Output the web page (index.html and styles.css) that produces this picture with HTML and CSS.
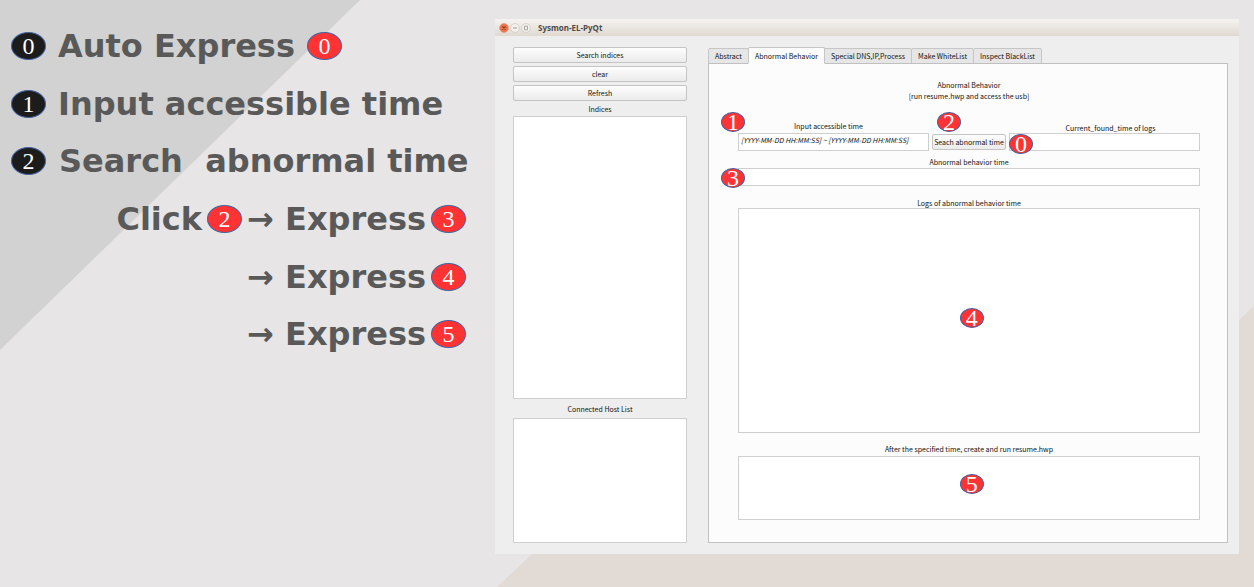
FILE: index.html
```html
<!DOCTYPE html>
<html lang="en">
<head>
<meta charset="utf-8">
<title>Sysmon-EL-PyQt</title>
<link rel="stylesheet" href="styles.css">
</head>
<body>
<svg class="backdrop" viewBox="0 0 1254 587" preserveAspectRatio="none" aria-hidden="true">
  <path fill="#d2d2d2" d="M0 0H360L0 350Z"/>
  <path fill="#e1dad5" d="M497 587L532 554L1225 333L1254 306V587Z"/>
</svg>
<main class="slide">
  <section class="steps">
    <div class="step"><span class="badge dark">0</span><span>Auto Express</span><span class="badge">0</span></div>
    <div class="step"><span class="badge dark">1</span><span>Input accessible time</span></div>
    <div class="step search"><span class="badge dark">2</span><span>Search  abnormal time</span></div>
    <div class="step result"><span>Click</span><span class="badge">2</span><span>→ Express</span><span class="badge">3</span></div>
    <div class="step result"><span>→ Express</span><span class="badge">4</span></div>
    <div class="step result"><span>→ Express</span><span class="badge">5</span></div>
  </section>

  <section class="window">
    <header class="titlebar">
      <button class="control" type="button" aria-label="Close"><svg viewBox="0 0 10 10"><circle cx="5" cy="5" r="4.4" fill="#ef7245" stroke="#d99a80" stroke-width=".8"/><path d="M3.4 3.4L6.6 6.6M6.6 3.4L3.4 6.6" stroke="#7c4130" stroke-width="1.1"/></svg></button>
      <button class="control" type="button" aria-label="Minimize"><svg viewBox="0 0 10 10"><circle cx="5" cy="5" r="4.4" fill="#f3f1ed" stroke="#d0ccc5" stroke-width=".8"/><path d="M3 5H7" stroke="#8b8882" stroke-width=".8"/></svg></button>
      <button class="control" type="button" aria-label="Maximize"><svg viewBox="0 0 10 10"><circle cx="5" cy="5" r="4.4" fill="#f3f1ed" stroke="#d0ccc5" stroke-width=".8"/><path d="M3.5 3.2H6.5V6.8H3.5Z" fill="none" stroke="#96938d" stroke-width=".8"/></svg></button>
      <h1 class="title">Sysmon-EL-PyQt</h1>
    </header>
    <div class="body">
      <aside class="sidebar">
        <div class="actions">
          <button class="button" type="button">Search indices</button>
          <button class="button" type="button">clear</button>
          <button class="button" type="button">Refresh</button>
        </div>
        <label class="label" for="indices">Indices</label>
        <select class="box indices" id="indices" multiple></select>
        <label class="label host-label" for="hosts">Connected Host List</label>
        <select class="box hosts" id="hosts" multiple></select>
      </aside>
      <div class="tabs">
        <div class="tablist" role="tablist">
          <button class="tab" type="button" role="tab">Abstract</button>
          <button class="tab selected" type="button" role="tab" aria-selected="true">Abnormal Behavior</button>
          <button class="tab" type="button" role="tab">Special DNS,IP,Process</button>
          <button class="tab" type="button" role="tab">Make WhiteList</button>
          <button class="tab" type="button" role="tab">Inspect BlackList</button>
        </div>
        <div class="pane" role="tabpanel">
          <div class="heading">Abnormal Behavior<br>[run resume.hwp and access the usb]</div>
          <div class="query">
            <div class="field range">
              <label class="label" for="range">Input accessible time</label>
              <input class="box line" id="range" type="text" placeholder="[YYYY-MM-DD HH:MM:SS] ~ [YYYY-MM-DD HH:MM:SS]">
              <span class="badge pin pin-range">1</span>
            </div>
            <div class="field submit">
              <button class="button" type="button">Seach abnormal time</button>
              <span class="badge pin pin-submit">2</span>
            </div>
            <div class="field found">
              <label class="label" for="found">Current_found_time of logs</label>
              <input class="box line" id="found" type="text">
              <span class="badge pin pin-found">0</span>
            </div>
          </div>
          <div class="field behavior">
            <label class="label" for="behavior">Abnormal behavior time</label>
            <input class="box line" id="behavior" type="text">
            <span class="badge pin pin-behavior">3</span>
          </div>
          <div class="field logs">
            <label class="label" for="logs">Logs of abnormal behavior time</label>
            <textarea class="box area" id="logs"></textarea>
            <span class="badge pin pin-logs">4</span>
          </div>
          <div class="field after">
            <label class="label" for="after">After the specified time, create and run resume.hwp</label>
            <textarea class="box area" id="after"></textarea>
            <span class="badge pin pin-after">5</span>
          </div>
        </div>
      </div>
    </div>
  </section>
</main>
</body>
</html>
```
FILE: styles.css
```css
* { box-sizing: border-box; }

body {
  margin: 0;
  background: #e7e5e5;
  font-family: "Noto Sans CJK KR", "Noto Sans", sans-serif;
  color: #111;
}

.backdrop {
  position: absolute;
  inset: 0;
  width: 100%;
  height: 100%;
  z-index: -1;
}

.slide {
  display: flex;
  min-height: 100vh;
  padding: 19px 15px 33px 0;
}

/* Step list */
.steps {
  flex: 0 0 495px;
  display: grid;
  grid-template-columns: minmax(0, 1fr);
  grid-auto-rows: 1fr;
  align-self: flex-start;
  min-width: 0;
  min-height: 59vh;
  margin-top: -2px;
  padding: 0 29px 0 11px;
}

.step {
  display: flex;
  align-items: center;
  gap: 12px;
  font: bold 32px/40px "DejaVu Sans", sans-serif;
  color: #595959;
  white-space: pre;
}

.step.search { gap: 13px; }

.step.result {
  justify-content: flex-end;
  gap: 5px;
}

.badge {
  display: flex;
  flex: none;
  align-items: center;
  justify-content: center;
  width: 35px;
  height: 28px;
  border: 1px solid #4463a0;
  border-radius: 50%;
  background: #ff3333;
  color: #fff;
  font: 24px/24px "Liberation Serif", serif;
}

.badge.dark { background: #1c1c1c; }

/* Application window */
.window {
  flex: 1;
  display: flex;
  flex-direction: column;
  min-width: 0;
  background: #eee;
  font-size: 7px;
}

.titlebar {
  display: flex;
  align-items: center;
  gap: 1px;
  height: 17px;
  padding-left: 4px;
  background: linear-gradient(#f5f3f1, #dfd9d0);
}

.control {
  width: 10px;
  height: 10px;
  padding: 0;
  border: 0;
  background: none;
}

.control svg { display: block; }

.title {
  margin: 0 0 0 6px;
  font: bold 8px/12px "Noto Sans", sans-serif;
  color: #4f4b46;
}

.body {
  flex: 1;
  display: flex;
  gap: 21px;
  padding: 11px 11px 11px 18px;
}

.sidebar {
  flex: 0 0 174px;
  display: flex;
  flex-direction: column;
}

.actions {
  display: grid;
  gap: 3px;
  margin-bottom: 3px;
}

.button {
  height: 16px;
  padding: 0;
  border: 1px solid #c4c4c4;
  border-radius: 2px;
  background: linear-gradient(#fdfdfd, #ebebeb);
  color: #111;
  font: inherit;
  line-height: 14px;
}

.label {
  display: block;
  line-height: 10px;
  text-align: center;
}

.box {
  display: block;
  width: 100%;
  border: 1px solid #cfcfcf;
  border-radius: 0;
  background: #fff;
  appearance: none;
  resize: none;
  outline: 0;
}

.indices {
  flex: 1;
  margin-top: 2px;
}

.host-label { margin-top: 5px; }

.hosts {
  height: 125px;
  margin-top: 4px;
}

/* Tabs */
.tabs {
  flex: 1;
  display: flex;
  flex-direction: column;
  min-width: 0;
}

.tablist {
  display: flex;
  align-items: flex-end;
  margin-bottom: -1px;
}

.tab {
  height: 16px;
  margin-left: -1px;
  padding: 0 6px;
  border: 1px solid #c6c6c6;
  border-radius: 2px 2px 0 0;
  background: #e6e6e6;
  color: #111;
  font: inherit;
  line-height: 14px;
  white-space: nowrap;
}

.tab:first-child { margin-left: 0; }

.tab.selected {
  height: 17px;
  border-bottom-color: #fcfcfc;
  background: #fcfcfc;
  z-index: 1;
}

.pane {
  flex: 1;
  display: flex;
  flex-direction: column;
  padding: 16px 27px 22px 29px;
  border: 1px solid #c0c0c0;
  background: #fcfcfc;
}

.heading {
  line-height: 11px;
  text-align: center;
}

.query {
  display: flex;
  align-items: flex-end;
  gap: 3px;
  margin-top: 19px;
}

.field { position: relative; }

.range, .found { flex: 1; }

.range .label { padding-right: 10px; margin-bottom: 2px; }

.found .label { padding-left: 12px; }

.submit .button {
  display: block;
  width: 74px;
  margin-bottom: 1px;
}

.line {
  height: 18px;
  padding: 0 3px 4px 2px;
  font: italic 7px/10px "Noto Sans CJK KR", "Noto Sans", sans-serif;
}

.line::placeholder { color: #111; }

.behavior { margin-top: 6px; }

.behavior .label { margin-bottom: 1px; }

.logs {
  flex: 1;
  display: flex;
  flex-direction: column;
  margin-top: 12px;
}

.logs .area { flex: 1; }

.after { margin-top: 11px; }

.after .area {
  height: 64px;
  margin-top: 2px;
}

/* Numbered pins over the fields */
.pin {
  position: absolute;
  width: 24px;
  height: 20px;
}

.pin-range { left: -17px; bottom: 19px; }
.pin-submit { left: 5px; bottom: 19px; }
.pin-found { left: 0; bottom: -3px; }
.pin-behavior { left: -17px; bottom: -2px; }
.pin-logs { left: 48%; top: 110px; }
.pin-after { left: 48%; top: 30px; }
```
